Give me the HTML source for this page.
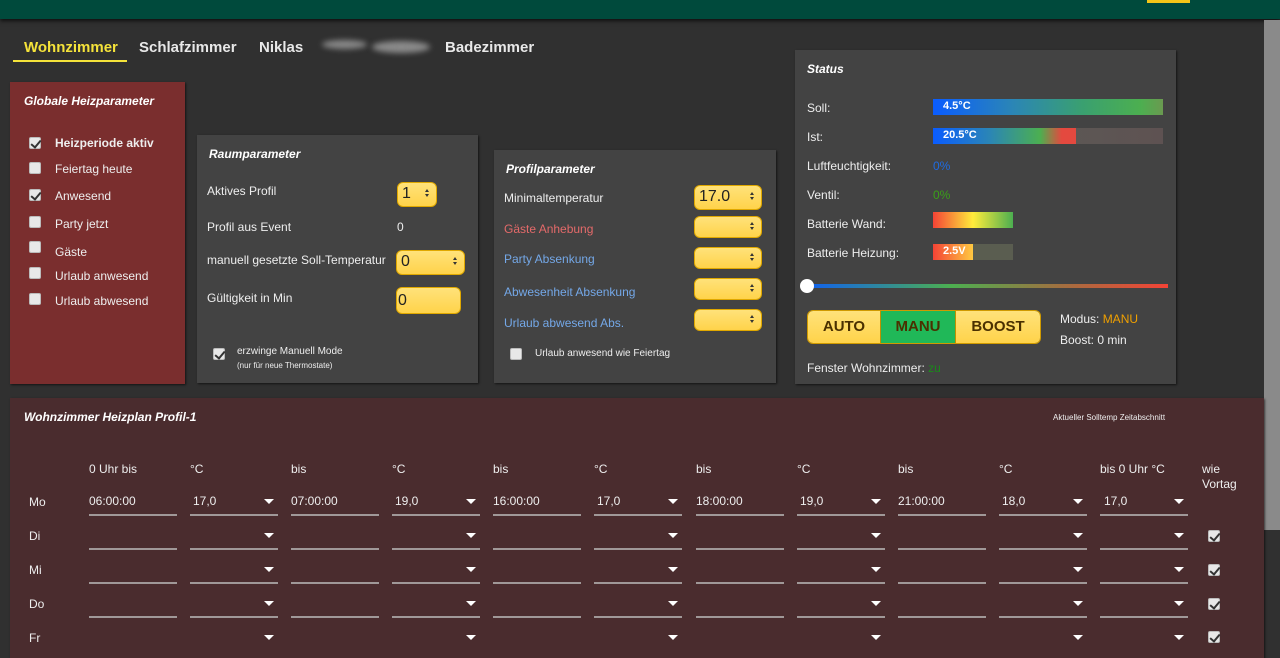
<!DOCTYPE html>
<html><head><meta charset="utf-8">
<style>
*{margin:0;padding:0;box-sizing:border-box}
body{width:1280px;height:649px;overflow:hidden;background:#303030;font-family:"Liberation Sans",sans-serif;color:#eee;position:relative;font-size:12px}
.a{position:absolute;white-space:nowrap}
.top{position:absolute;left:0;top:0;width:1280px;height:19px;background:#004a3c;box-shadow:0 2px 4px rgba(0,0,0,.7)}
.tab{position:absolute;top:39px;font-size:15px;font-weight:bold;color:#e8e8e8}
.panel{position:absolute;box-shadow:1px 1px 2px rgba(0,0,0,.6)}
.ttl{position:absolute;font-weight:bold;font-style:italic;font-size:12px;color:#fff}
.cb{position:absolute;width:12px;height:12px;background:#e8e8e8;border-radius:2px;border:1px solid #bbb}
.cb.c::after{content:"";position:absolute;left:3px;top:0px;width:4px;height:8px;border:solid #333;border-width:0 2px 2px 0;transform:rotate(40deg)}
.sel{position:absolute;background:linear-gradient(#ffe27a,#ffd34a);border:1px solid #e0a800;border-radius:6px;color:#222;font-size:16px;padding-left:4px;line-height:22px}
.sel .ar{position:absolute;right:6px;top:6px;width:5px;height:10px}
.sel .ar::before{content:"";position:absolute;left:0;top:0;border-left:2.5px solid transparent;border-right:2.5px solid transparent;border-bottom:3px solid #333}
.sel .ar::after{content:"";position:absolute;left:0;top:5px;border-left:2.5px solid transparent;border-right:2.5px solid transparent;border-top:3px solid #333}
.ul{position:absolute;height:2px;width:88px;background:#a09898}
.tri{position:absolute;width:0;height:0;border-left:5px solid transparent;border-right:5px solid transparent;border-top:5px solid #fff}
.tv{position:absolute;font-size:12px;color:#eee}
</style></head><body>
<div class="top"></div>
<div class="a" style="left:1147px;top:0;width:43px;height:3px;background:#f5c518"></div>
<div class="a" style="left:1264px;top:20px;width:16px;height:510px;background:#8a8a8a"></div>

<div class="tab" style="left:24px;color:#f5e33a">Wohnzimmer</div>
<div class="a" style="left:13px;top:60px;width:114px;height:2px;background:#f5e33a"></div>
<div class="tab" style="left:139px">Schlafzimmer</div>
<div class="tab" style="left:259px">Niklas</div>
<div class="a" style="left:322px;top:40px;width:45px;height:9px;background:#888;border-radius:50%;filter:blur(3px)"></div>
<div class="a" style="left:372px;top:41px;width:58px;height:12px;background:#8a8a8a;border-radius:50%;filter:blur(3px)"></div>
<div class="tab" style="left:445px">Badezimmer</div>

<!-- Global -->
<div class="panel" style="left:10px;top:82px;width:175px;height:302px;background:#7a2e2e"></div>
<div class="ttl" style="left:24px;top:94px">Globale Heizparameter</div>
<div class="cb c" style="left:29px;top:137px"></div><div class="a" style="left:55px;top:136px;font-weight:bold">Heizperiode aktiv</div>
<div class="cb" style="left:29px;top:162px"></div><div class="a" style="left:55px;top:162px">Feiertag heute</div>
<div class="cb c" style="left:29px;top:189px"></div><div class="a" style="left:55px;top:189px">Anwesend</div>
<div class="cb" style="left:29px;top:216px"></div><div class="a" style="left:55px;top:217px">Party jetzt</div>
<div class="cb" style="left:29px;top:241px"></div><div class="a" style="left:55px;top:245px">Gäste</div>
<div class="cb" style="left:29px;top:267px"></div><div class="a" style="left:55px;top:269px">Urlaub anwesend</div>
<div class="cb" style="left:29px;top:293px"></div><div class="a" style="left:55px;top:294px">Urlaub abwesend</div>

<!-- Raum -->
<div class="panel" style="left:197px;top:135px;width:281px;height:248px;background:#434343"></div>
<div class="ttl" style="left:209px;top:147px">Raumparameter</div>
<div class="a" style="left:207px;top:184px">Aktives Profil</div>
<div class="sel" style="left:397px;top:182px;width:40px;height:25px">1<span class="ar"></span></div>
<div class="a" style="left:207px;top:220px">Profil aus Event</div>
<div class="a" style="left:397px;top:220px">0</div>
<div class="a" style="left:207px;top:253px">manuell gesetzte Soll-Temperatur</div>
<div class="sel" style="left:396px;top:250px;width:69px;height:25px">0<span class="ar"></span></div>
<div class="a" style="left:207px;top:291px">Gültigkeit in Min</div>
<div class="sel" style="left:396px;top:287px;width:65px;height:27px;padding-left:1px;line-height:25px">0</div>
<div class="cb c" style="left:213px;top:348px"></div>
<div class="a" style="left:237px;top:346px;font-size:10px">erzwinge Manuell Mode</div>
<div class="a" style="left:237px;top:361px;font-size:8px">(nur für neue Thermostate)</div>

<!-- Profil -->
<div class="panel" style="left:494px;top:150px;width:282px;height:233px;background:#434343"></div>
<div class="ttl" style="left:506px;top:162px">Profilparameter</div>
<div class="a" style="left:504px;top:191px">Minimaltemperatur</div>
<div class="sel" style="left:694px;top:185px;width:68px;height:25px">17.0<span class="ar"></span></div>
<div class="a" style="left:504px;top:222px;color:#e46a6a">Gäste Anhebung</div>
<div class="sel" style="left:694px;top:216px;width:68px;height:22px"><span class="ar" style="top:5px"></span></div>
<div class="a" style="left:504px;top:252px;color:#74a8e8">Party Absenkung</div>
<div class="sel" style="left:694px;top:247px;width:68px;height:22px"><span class="ar" style="top:5px"></span></div>
<div class="a" style="left:504px;top:285px;color:#74a8e8">Abwesenheit Absenkung</div>
<div class="sel" style="left:694px;top:278px;width:68px;height:22px"><span class="ar" style="top:5px"></span></div>
<div class="a" style="left:504px;top:316px;color:#74a8e8">Urlaub abwesend Abs.</div>
<div class="sel" style="left:694px;top:309px;width:68px;height:22px"><span class="ar" style="top:5px"></span></div>
<div class="cb" style="left:510px;top:348px"></div>
<div class="a" style="left:535px;top:348px;font-size:10px">Urlaub anwesend wie Feiertag</div>

<!-- Status -->
<div class="panel" style="left:795px;top:50px;width:381px;height:334px;background:#434343"></div>
<div class="ttl" style="left:807px;top:62px">Status</div>
<div class="a" style="left:807px;top:101px">Soll:</div>
<div class="a" style="left:933px;top:99px;width:230px;height:16px;background:linear-gradient(90deg,#0a5cff,#2b86b5 35%,#3aa070 65%,#4caf50 90%,#6a9a50);color:#fff;font-weight:bold;font-size:11px;padding-left:10px;line-height:15px">4.5°C</div>
<div class="a" style="left:807px;top:130px">Ist:</div>
<div class="a" style="left:933px;top:128px;width:230px;height:16px;background:linear-gradient(90deg,#5a5f58,#5e5252);"></div>
<div class="a" style="left:933px;top:128px;width:143px;height:16px;background:linear-gradient(90deg,#0a5cff,#2b86b5 40%,#4caf50 75%,#e4493f 90%);color:#fff;font-weight:bold;font-size:11px;padding-left:10px;line-height:15px">20.5°C</div>
<div class="a" style="left:807px;top:159px">Luftfeuchtigkeit:</div>
<div class="a" style="left:933px;top:159px;color:#1f6be0">0%</div>
<div class="a" style="left:807px;top:188px">Ventil:</div>
<div class="a" style="left:933px;top:188px;color:#3aa018">0%</div>
<div class="a" style="left:807px;top:217px">Batterie Wand:</div>
<div class="a" style="left:933px;top:212px;width:80px;height:16px;background:linear-gradient(90deg,#f44336,#ffeb3b 50%,#4caf50)"></div>
<div class="a" style="left:807px;top:246px">Batterie Heizung:</div>
<div class="a" style="left:933px;top:244px;width:80px;height:16px;background:#5a5d50"></div>
<div class="a" style="left:933px;top:244px;width:40px;height:16px;background:linear-gradient(90deg,#f44336,#ffc940);color:#fff;font-weight:bold;font-size:11px;padding-left:10px;line-height:15px">2.5V</div>
<div class="a" style="left:806px;top:284px;width:362px;height:4px;background:linear-gradient(90deg,#1060f0,#4caf50 40%,#a07040 70%,#f44336)"></div>
<div class="a" style="left:800px;top:279px;width:14px;height:14px;border-radius:50%;background:#fff"></div>
<div class="a" style="left:807px;top:310px;width:234px;height:34px;border:1px solid #d09a00;border-radius:6px;overflow:hidden;display:flex;font-weight:bold;font-size:15px;color:#4a3000">
<div style="width:72px;background:linear-gradient(#ffe27a,#ffd34a);text-align:center;line-height:32px">AUTO</div>
<div style="width:76px;background:#20b858;text-align:center;line-height:32px;border-left:1px solid #c09000;border-right:1px solid #c09000">MANU</div>
<div style="flex:1;background:linear-gradient(#ffe27a,#ffd34a);text-align:center;line-height:32px">BOOST</div></div>
<div class="a" style="left:1060px;top:312px">Modus: <span style="color:#f0a000">MANU</span></div>
<div class="a" style="left:1060px;top:333px">Boost: 0 min</div>
<div class="a" style="left:807px;top:361px">Fenster Wohnzimmer: <span style="color:#1a8a1a">zu</span></div>

<!-- Heizplan -->
<div class="panel" style="left:10px;top:398px;width:1254px;height:260px;background:#4a2c2e"></div>
<div class="ttl" style="left:24px;top:410px">Wohnzimmer Heizplan Profil-1</div>
<div class="a" style="left:1053px;top:413px;font-size:8px">Aktueller Solltemp Zeitabschnitt</div>

<div class="tv" style="left:89px;top:462px">0 Uhr bis</div>
<div class="tv" style="left:190px;top:462px">°C</div>
<div class="tv" style="left:291px;top:462px">bis</div>
<div class="tv" style="left:392px;top:462px">°C</div>
<div class="tv" style="left:493px;top:462px">bis</div>
<div class="tv" style="left:594px;top:462px">°C</div>
<div class="tv" style="left:696px;top:462px">bis</div>
<div class="tv" style="left:797px;top:462px">°C</div>
<div class="tv" style="left:898px;top:462px">bis</div>
<div class="tv" style="left:999px;top:462px">°C</div>
<div class="tv" style="left:1100px;top:462px">bis 0 Uhr °C</div>
<div class="tv" style="left:1202px;top:462px;line-height:15px;white-space:normal">wie<br>Vortag</div>

<div class="tv" style="left:29px;top:495px">Mo</div>
<div class="tv" style="left:29px;top:529px">Di</div>
<div class="tv" style="left:29px;top:563px">Mi</div>
<div class="tv" style="left:29px;top:597px">Do</div>
<div class="tv" style="left:29px;top:631px">Fr</div>

<div class="tv" style="left:89px;top:494px">06:00:00</div>
<div class="tv" style="left:193px;top:494px">17,0</div>
<div class="tv" style="left:291px;top:494px">07:00:00</div>
<div class="tv" style="left:395px;top:494px">19,0</div>
<div class="tv" style="left:493px;top:494px">16:00:00</div>
<div class="tv" style="left:597px;top:494px">17,0</div>
<div class="tv" style="left:696px;top:494px">18:00:00</div>
<div class="tv" style="left:800px;top:494px">19,0</div>
<div class="tv" style="left:898px;top:494px">21:00:00</div>
<div class="tv" style="left:1002px;top:494px">18,0</div>
<div class="tv" style="left:1104px;top:494px">17,0</div>

<!-- underlines rows -->
<div id="grid"></div>
<div class="ul" style="left:89px;top:514px"></div><div class="ul" style="left:190px;top:514px"></div><div class="ul" style="left:291px;top:514px"></div><div class="ul" style="left:392px;top:514px"></div><div class="ul" style="left:493px;top:514px"></div><div class="ul" style="left:594px;top:514px"></div><div class="ul" style="left:696px;top:514px"></div><div class="ul" style="left:797px;top:514px"></div><div class="ul" style="left:898px;top:514px"></div><div class="ul" style="left:999px;top:514px"></div><div class="ul" style="left:1100px;top:514px"></div>
<div class="ul" style="left:89px;top:548px"></div><div class="ul" style="left:190px;top:548px"></div><div class="ul" style="left:291px;top:548px"></div><div class="ul" style="left:392px;top:548px"></div><div class="ul" style="left:493px;top:548px"></div><div class="ul" style="left:594px;top:548px"></div><div class="ul" style="left:696px;top:548px"></div><div class="ul" style="left:797px;top:548px"></div><div class="ul" style="left:898px;top:548px"></div><div class="ul" style="left:999px;top:548px"></div><div class="ul" style="left:1100px;top:548px"></div>
<div class="ul" style="left:89px;top:582px"></div><div class="ul" style="left:190px;top:582px"></div><div class="ul" style="left:291px;top:582px"></div><div class="ul" style="left:392px;top:582px"></div><div class="ul" style="left:493px;top:582px"></div><div class="ul" style="left:594px;top:582px"></div><div class="ul" style="left:696px;top:582px"></div><div class="ul" style="left:797px;top:582px"></div><div class="ul" style="left:898px;top:582px"></div><div class="ul" style="left:999px;top:582px"></div><div class="ul" style="left:1100px;top:582px"></div>
<div class="ul" style="left:89px;top:616px"></div><div class="ul" style="left:190px;top:616px"></div><div class="ul" style="left:291px;top:616px"></div><div class="ul" style="left:392px;top:616px"></div><div class="ul" style="left:493px;top:616px"></div><div class="ul" style="left:594px;top:616px"></div><div class="ul" style="left:696px;top:616px"></div><div class="ul" style="left:797px;top:616px"></div><div class="ul" style="left:898px;top:616px"></div><div class="ul" style="left:999px;top:616px"></div><div class="ul" style="left:1100px;top:616px"></div>

<!-- arrows -->
<div class="tri" style="left:264px;top:499px"></div><div class="tri" style="left:466px;top:499px"></div><div class="tri" style="left:668px;top:499px"></div><div class="tri" style="left:871px;top:499px"></div><div class="tri" style="left:1073px;top:499px"></div><div class="tri" style="left:1174px;top:499px"></div>
<div class="tri" style="left:264px;top:533px"></div><div class="tri" style="left:466px;top:533px"></div><div class="tri" style="left:668px;top:533px"></div><div class="tri" style="left:871px;top:533px"></div><div class="tri" style="left:1073px;top:533px"></div><div class="tri" style="left:1174px;top:533px"></div>
<div class="tri" style="left:264px;top:567px"></div><div class="tri" style="left:466px;top:567px"></div><div class="tri" style="left:668px;top:567px"></div><div class="tri" style="left:871px;top:567px"></div><div class="tri" style="left:1073px;top:567px"></div><div class="tri" style="left:1174px;top:567px"></div>
<div class="tri" style="left:264px;top:601px"></div><div class="tri" style="left:466px;top:601px"></div><div class="tri" style="left:668px;top:601px"></div><div class="tri" style="left:871px;top:601px"></div><div class="tri" style="left:1073px;top:601px"></div><div class="tri" style="left:1174px;top:601px"></div>
<div class="tri" style="left:264px;top:635px"></div><div class="tri" style="left:466px;top:635px"></div><div class="tri" style="left:668px;top:635px"></div><div class="tri" style="left:871px;top:635px"></div><div class="tri" style="left:1073px;top:635px"></div><div class="tri" style="left:1174px;top:635px"></div>

<div class="cb c" style="left:1208px;top:530px"></div>
<div class="cb c" style="left:1208px;top:564px"></div>
<div class="cb c" style="left:1208px;top:598px"></div>
<div class="cb c" style="left:1208px;top:631px"></div>
</body></html>
